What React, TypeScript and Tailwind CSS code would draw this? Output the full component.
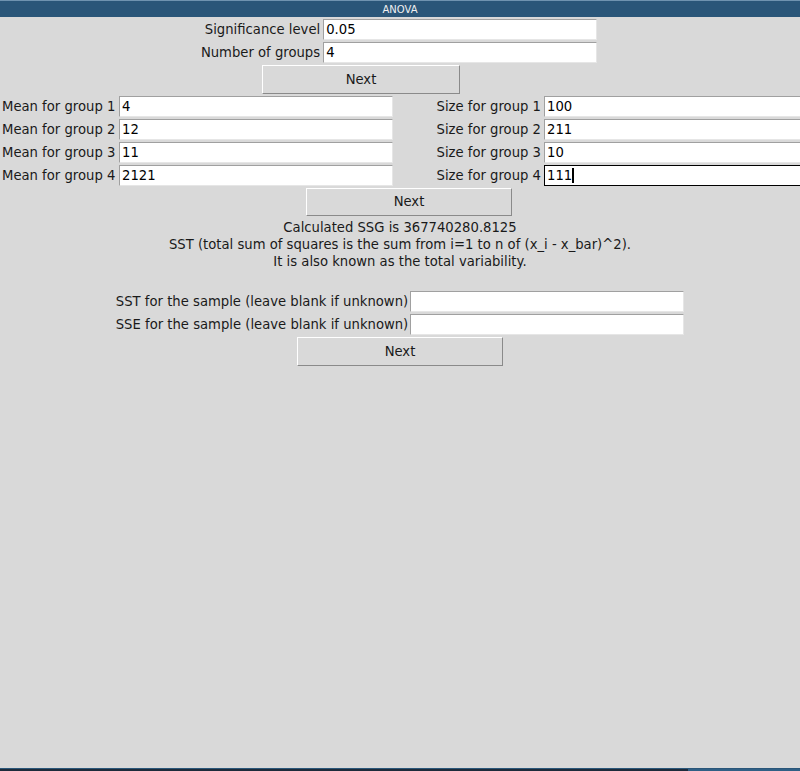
import React from "react";

const font = { fontFamily: '"DejaVu Sans", "Liberation Sans", sans-serif' };

function Entry({ value, w = "w-[274px]", focused = false }: { value: string; w?: string; focused?: boolean }) {
  return (
    <div
      className={`${w} h-[21px] bg-white flex items-center pl-[2px] text-black leading-none shrink-0 ${
        focused
          ? "border border-black"
          : "border-t border-l border-t-[#a0a0a0] border-l-[#a0a0a0] border-b border-r border-b-[#e6e6e6] border-r-[#e6e6e6]"
      }`}
    >
      <span className="whitespace-pre">{value}</span>
      {focused && <span className="inline-block w-[2px] h-[15px] bg-black" />}
    </div>
  );
}

function Btn({ w, h, ml }: { w: string; h: string; ml?: string }) {
  return (
    <div
      className={`${w} ${h} ${ml ?? ""} flex items-center justify-center text-[#1a1a1a] bg-[#d9d9d9] border border-t-white border-l-white border-b-[#8a8a8a] border-r-[#8a8a8a] shrink-0`}
    >
      Next
    </div>
  );
}

export default function App() {
  const means = ["4", "12", "11", "2121"];
  const sizes = ["100", "211", "10", "111"];
  return (
    <div className="w-[800px] h-[771px] bg-[#d9d9d9] flex flex-col overflow-hidden" style={font}>
      <div className="h-[17px] bg-[#2a5679] border-t border-t-[#6f93b0] flex items-center justify-center text-[#f0f0f0] text-[10px] font-normal shrink-0">
        ANOVA
      </div>
      <div className="flex-1 flex flex-col text-[13.2px] text-[#1a1a1a]">
        <div className="mt-[2px] flex flex-col gap-[2px] items-center">
          <div className="flex items-center h-[21px] ml-[2px]">
            <span className="pr-[3px]">Significance level</span>
            <Entry value="0.05" />
          </div>
          <div className="flex items-center h-[21px] mr-[2px]">
            <span className="pr-[3px]">Number of groups</span>
            <Entry value="4" />
          </div>
        </div>
        <div className="mt-[2px] flex">
          <Btn w="w-[198px]" h="h-[29px]" ml="ml-[262px]" />
        </div>
        <div className="mt-[2px] flex flex-col gap-[2px]">
          {means.map((m, i) => (
            <div key={i} className="flex items-center h-[21px] whitespace-nowrap w-[900px] shrink-0">
              <span className="w-[119px] pl-[2px] shrink-0">Mean for group {i + 1}</span>
              <Entry value={m} />
              <span className="w-[151px] text-right pr-[3px] shrink-0">Size for group {i + 1}</span>
              <Entry value={sizes[i]} w="w-[274px]" focused={i === 3} />
            </div>
          ))}
        </div>
        <div className="mt-[2px] flex">
          <Btn w="w-[206px]" h="h-[28px]" ml="ml-[306px]" />
        </div>
        <div className="mt-[3px] flex flex-col items-center leading-[17px]">
          <span>Calculated SSG is 367740280.8125</span>
          <span>SST (total sum of squares is the sum from i=1 to n of (x_i - x_bar)^2).</span>
          <span>It is also known as the total variability.</span>
          <span>&nbsp;</span>
        </div>
        <div className="mt-[4px] flex flex-col gap-[2px] items-center">
          <div className="flex items-center h-[21px]">
            <span className="pr-[2px]">SST for the sample (leave blank if unknown)</span>
            <Entry value="" />
          </div>
          <div className="flex items-center h-[21px]">
            <span className="pr-[2px]">SSE for the sample (leave blank if unknown)</span>
            <Entry value="" />
          </div>
        </div>
        <div className="mt-[2px] flex justify-center">
          <Btn w="w-[206px]" h="h-[29px]" />
        </div>
      </div>
      <div className="h-[3px] shrink-0 flex flex-col">
        <div className="h-[1px] bg-[#2a5679]" />
        <div className="h-[2px] flex">
          <div className="w-[688px] bg-[#1d2b3b]" />
          <div className="flex-1 bg-[#2f5f85]" />
        </div>
      </div>
    </div>
  );
}
